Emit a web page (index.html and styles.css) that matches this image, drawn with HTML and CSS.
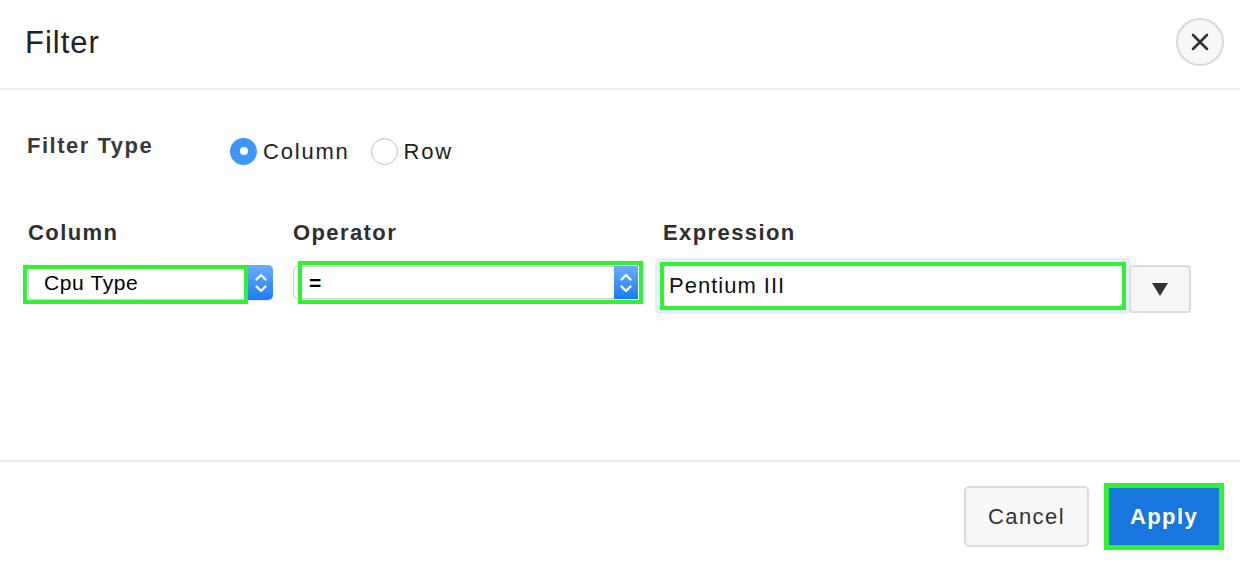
FILE: index.html
```html
<!DOCTYPE html>
<html lang="en">
<head>
<meta charset="utf-8">
<title>Filter</title>
<link rel="stylesheet" href="styles.css">
</head>
<body>
<div class="dialog">
  <header class="dlg-header">
    <h1 class="dlg-title">Filter</h1>
    <button class="close-btn" aria-label="Close">
      <svg width="18" height="18" viewBox="0 0 18 18"><path d="M2 2L16 16M16 2L2 16" stroke="#333" stroke-width="2.6" stroke-linecap="round" fill="none"/></svg>
    </button>
  </header>

  <main class="dlg-body">
    <div class="type-row">
      <div class="type-label">Filter Type</div>
      <div class="radios">
        <label class="radio-item"><span class="radio checked"><span class="dot"></span></span><span class="radio-text">Column</span></label>
        <label class="radio-item"><span class="radio"></span><span class="radio-text">Row</span></label>
      </div>
    </div>

    <div class="fields">
      <div class="field field-col">
        <div class="field-label">Column</div>
        <div class="control">
          <div class="select sel-col">
            <span class="sel-text">Cpu Type</span>
            <span class="stepper">
              <svg width="14" height="26" viewBox="0 0 14 26"><path d="M2.5 9.5L7 5L11.5 9.5M2.5 16.5L7 21L11.5 16.5" stroke="#fff" stroke-width="2.4" fill="none" stroke-linecap="round" stroke-linejoin="round"/></svg>
            </span>
            <span class="hl hl-col"></span>
          </div>
        </div>
      </div>

      <div class="field field-op">
        <div class="field-label">Operator</div>
        <div class="control">
          <div class="select sel-op">
            <span class="sel-text">=</span>
            <span class="stepper">
              <svg width="14" height="26" viewBox="0 0 14 26"><path d="M2.5 9.5L7 5L11.5 9.5M2.5 16.5L7 21L11.5 16.5" stroke="#fff" stroke-width="2.4" fill="none" stroke-linecap="round" stroke-linejoin="round"/></svg>
            </span>
            <span class="hl hl-op"></span>
          </div>
        </div>
      </div>

      <div class="field field-expr">
        <div class="field-label">Expression</div>
        <div class="control expr-control">
          <div class="halo">
            <div class="expr-input">Pentium III</div>
          </div>
          <button class="drop-btn" aria-label="Open list">
            <svg width="16" height="13" viewBox="0 0 16 13"><polygon points="0,0 16,0 8,13" fill="#333"/></svg>
          </button>
        </div>
      </div>
    </div>
  </main>

  <footer class="dlg-footer">
    <button class="btn btn-cancel">Cancel</button>
    <button class="btn btn-apply">Apply</button>
  </footer>
</div>
</body>
</html>
```

FILE: styles.css
```css
* { box-sizing: border-box; }

html, body {
  margin: 0;
  padding: 0;
  background: #fff;
}

body {
  font-family: "Liberation Sans", Arial, sans-serif;
  color: #222;
  width: 1240px;
  height: 566px;
  overflow: hidden;
}

.dialog {
  display: flex;
  flex-direction: column;
  height: 566px;
}

/* Header */
.dlg-header {
  height: 90px;
  display: flex;
  align-items: center;
  justify-content: space-between;
  padding: 0 16px 5px 25px;
  border-bottom: 2px solid #f1f1f1;
}

.dlg-title {
  margin: 3px 0 0 0;
  font-size: 31px;
  font-weight: 400;
  line-height: 36px;
  letter-spacing: 1px;
  color: #222;
}

.close-btn {
  width: 48px;
  height: 48px;
  border-radius: 50%;
  border: 2px solid #dadada;
  background: #f7f7f7;
  display: flex;
  align-items: center;
  justify-content: center;
  padding: 0;
}

/* Body */
.dlg-body {
  height: 370px;
  padding: 42px 24px 0 24px;
}

.type-row {
  display: flex;
  align-items: flex-start;
}

.type-label {
  width: 206px;
  padding-left: 3px;
  padding-top: 2px;
  font-size: 22px;
  line-height: 24px;
  font-weight: 700;
  letter-spacing: 1.5px;
  color: #3a3a3a;
}

.radios {
  display: flex;
  align-items: center;
  gap: 21px;
  margin-top: 4px;
}

.radio-item {
  display: flex;
  align-items: center;
  gap: 6px;
}

.radio {
  width: 27px;
  height: 27px;
  border-radius: 50%;
  border: 1.5px solid #c2c2c2;
  background: #fff;
  box-shadow: inset 0 1px 1px rgba(0,0,0,0.06);
  display: flex;
  align-items: center;
  justify-content: center;
}

.radio.checked {
  border: none;
  background: #3e96f5;
  box-shadow: none;
}

.radio .dot {
  width: 8px;
  height: 8px;
  border-radius: 50%;
  background: #fff;
}

.radio-text {
  font-size: 22px;
  line-height: 28px;
  letter-spacing: 1.8px;
  color: #222;
  padding-top: 2px;
}

/* Fields */
.fields {
  display: flex;
  align-items: flex-start;
  margin-top: 55px;
}

.field-label {
  font-size: 22px;
  line-height: 24px;
  font-weight: 700;
  letter-spacing: 1.4px;
  color: #2e2e2e;
  margin-bottom: 13px;
}

.field-col { width: 249px; }
.field-col .field-label { padding-left: 4px; }

.field-op { width: 349px; margin-left: 20px; }
.field-op .field-label { padding-left: 0; }

.field-expr { margin-left: 13px; }
.field-expr .field-label { padding-left: 8px; }

.control {
  height: 56px;
  display: flex;
  align-items: flex-start;
}

.select {
  position: relative;
  display: flex;
  align-items: center;
  background: #fff;
  border: 1px solid #cfcfcf;
  border-right: none;
  border-radius: 5px;
  box-shadow: 0 1px 1px rgba(0,0,0,0.08);
}

.sel-col {
  width: 245px;
  height: 35px;
  margin-left: 4px;
  margin-top: 7px;
}

.sel-op {
  width: 345px;
  height: 33px;
  margin-top: 8px;
}

.sel-text {
  flex: 1;
  font-size: 21px;
  letter-spacing: 0.6px;
  color: #000;
}

.sel-col .sel-text { padding-left: 15px; }
.sel-op .sel-text { padding-left: 15px; font-weight: 700; }

.stepper {
  align-self: stretch;
  margin: -1px 0;
  width: 25px;
  background: linear-gradient(#6cacfa, #1a7cf6);
  border-radius: 0 5px 5px 0;
  display: flex;
  align-items: center;
  justify-content: center;
}

.sel-op .stepper {
  width: 24px;
  border-radius: 0;
}

/* green inspection highlights laid over controls */
.hl {
  position: absolute;
  border: 4px solid #2ef32f;
  pointer-events: none;
}

.hl-col {
  left: -6px;
  top: -1px;
  width: 225px;
  height: 39px;
}

.hl-op {
  left: 4px;
  top: -6px;
  width: 345px;
  height: 43px;
}

.expr-control {
  align-items: flex-start;
}

.halo {
  width: 476px;
  height: 56px;
  padding: 4px 5px;
  background: #e5eefb;
  border-radius: 6px;
}

.expr-input {
  height: 48px;
  background: #fff;
  border: 4px solid #2ef32f;
  font-size: 22px;
  line-height: 40px;
  letter-spacing: 1px;
  padding-left: 5px;
  color: #111;
}

.drop-btn {
  width: 62px;
  height: 48px;
  margin-top: 7px;
  margin-left: -2px;
  background: #f6f6f6;
  border: 2px solid #dcdcdc;
  border-radius: 4px;
  display: flex;
  align-items: center;
  justify-content: center;
  padding: 0;
}

/* Footer */
.dlg-footer {
  flex: 1;
  border-top: 2px solid #ebebeb;
  display: flex;
  justify-content: flex-end;
  align-items: center;
  gap: 15px;
  padding: 5px 16px 0 0;
}

.btn {
  font-family: "Liberation Sans", Arial, sans-serif;
  font-size: 22px;
  letter-spacing: 1.4px;
  padding: 0;
}

.btn-cancel {
  width: 125px;
  height: 61px;
  background: #f7f7f7;
  border: 2px solid #dcdcdc;
  border-radius: 5px;
  color: #333;
}

.btn-apply {
  width: 120px;
  height: 67px;
  background: #1877df;
  border: 5px solid #2ef32f;
  color: #fff;
  font-weight: 700;
  border-radius: 0;
}
```
